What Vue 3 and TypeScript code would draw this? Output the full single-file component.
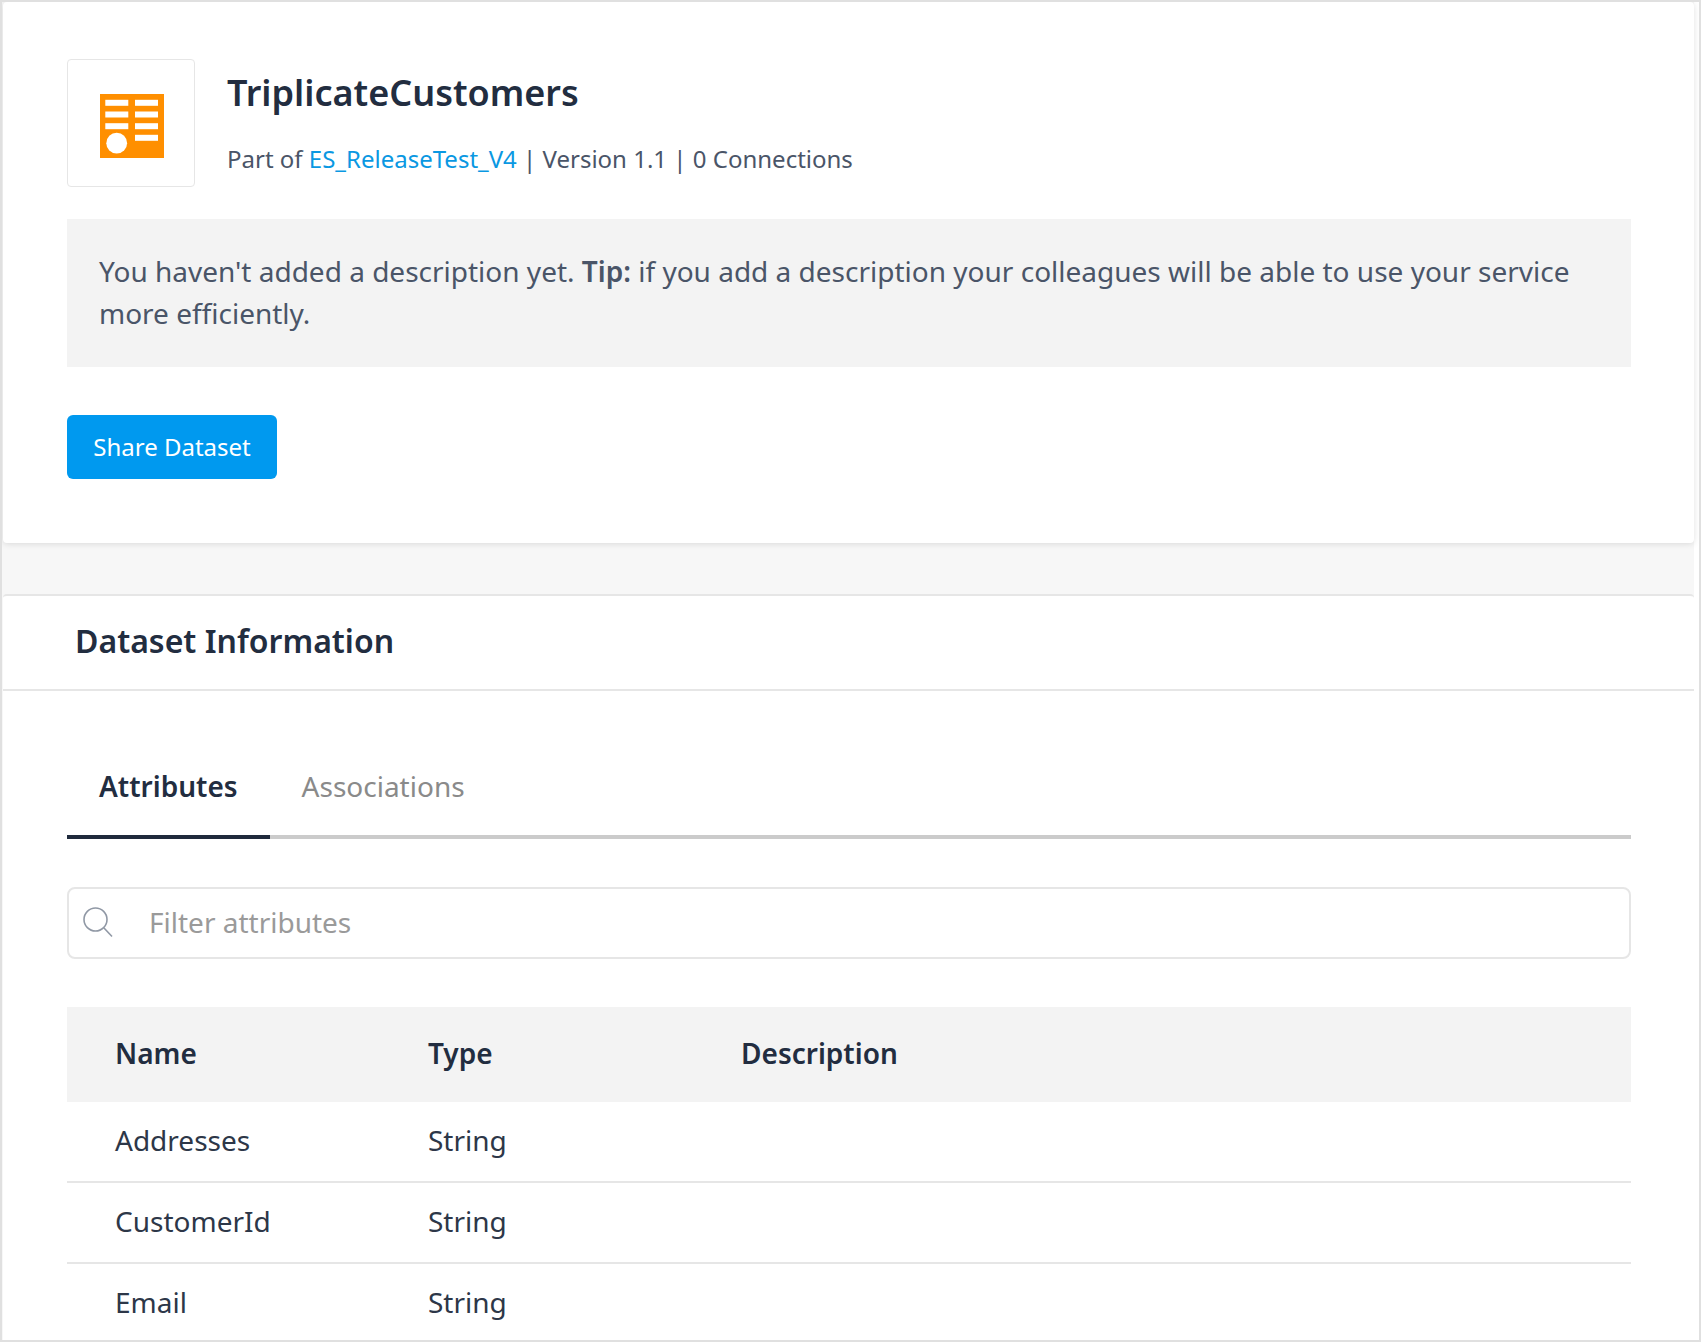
<template>
  <div class="frame">
    <div class="page">
      <section class="card summary">
        <div class="head">
          <div class="icon-box">
            <svg width="64" height="64" viewBox="0 0 64 64">
              <rect width="64" height="64" fill="#ff8f00" />
              <g fill="#fff">
                <rect v-for="(b, i) in bars" :key="i" :x="b[0]" :y="b[1]" width="23" height="6" />
              </g>
              <circle cx="16.7" cy="49.2" r="10.4" fill="#fff" />
            </svg>
          </div>
          <div class="head-text">
            <h1>TriplicateCustomers</h1>
            <p class="meta">Part of <a class="link">ES_ReleaseTest_V4</a> | Version 1.1 | 0 Connections</p>
          </div>
        </div>
        <div class="description">
          You haven't added a description yet. <b>Tip:</b> if you add a description your colleagues will be able to use your service more efficiently.
        </div>
        <button class="share">Share Dataset</button>
      </section>

      <section class="card info">
        <h2>Dataset Information</h2>
        <div class="info-body">
          <div class="tabs">
            <div class="tab active">Attributes</div>
            <div class="tab">Associations</div>
          </div>
          <div class="filter">
            <svg class="search" width="32" height="32" viewBox="0 0 32 32" fill="none" stroke="#9098a5" stroke-width="1.6">
              <circle cx="13.5" cy="13.5" r="11.5" />
              <path d="M22 22l8 8.5" />
            </svg>
            <span>Filter attributes</span>
          </div>
          <div class="table">
            <div class="row header">
              <div>Name</div>
              <div>Type</div>
              <div>Description</div>
            </div>
            <div class="row" v-for="attr in attributes" :key="attr.name">
              <div>{{ attr.name }}</div>
              <div>{{ attr.type }}</div>
              <div></div>
            </div>
          </div>
        </div>
      </section>
    </div>
  </div>
</template>

<script setup lang="ts">
const bars: [number, number][] = [
  [5.3, 5.8], [35, 5.8],
  [5.3, 17.5], [35, 17.5],
  [5.3, 29.2], [35, 29.2],
  [35, 40.8],
];

const attributes = [
  { name: 'Addresses', type: 'String' },
  { name: 'CustomerId', type: 'String' },
  { name: 'Email', type: 'String' },
];
</script>

<style>
html,
body {
  margin: 0;
  overflow: hidden;
  background: #fff;
}
</style>

<style scoped>
.frame {
  box-sizing: border-box;
  width: 1701px;
  height: 1342px;
  border: 2px solid #e0e0e0;
  overflow: hidden;
  font-family: "Noto Sans", sans-serif;
  color: #222d40;
}

.page {
  width: 1692px;
  background: #f7f7f7;
}

.card {
  margin-left: 1px;
  background: #fff;
  border-radius: 4px;
}

.summary {
  height: 541px;
  box-sizing: border-box;
  padding: 57px 63px 0 64px;
  box-shadow: 0 1px 6px rgb(0 0 0 / 12%);
}

.head {
  display: flex;
  gap: 32px;
}

.icon-box {
  box-sizing: border-box;
  width: 128px;
  height: 128px;
  padding: 5px 0 0 2px;
  border: 1px solid #e6e6e6;
  border-radius: 4px;
  display: flex;
  align-items: center;
  justify-content: center;
}

h1 {
  margin: 12px 0 0;
  font-size: 36px;
  line-height: 44px;
  font-weight: 600;
}

.meta {
  margin: 28px 0 0;
  font-size: 24px;
  line-height: 32px;
  color: #4a5568;
}

.link {
  color: #0a98e2;
}

.description {
  margin-top: 32px;
  padding: 31px 32px;
  height: 148px;
  box-sizing: border-box;
  background: #f3f3f3;
  font-size: 28px;
  line-height: 42px;
  color: #4a5568;
}

.description b {
  font-weight: 600;
}

.share {
  display: block;
  margin-top: 48px;
  padding: 0 0 2px;
  width: 210px;
  height: 64px;
  border: 0;
  border-radius: 6px;
  background: #0099ef;
  color: #fff;
  font-family: inherit;
  font-size: 24px;
}

.info {
  margin-top: 51px;
  border-top: 2px solid #e6e6e6;
}

h2 {
  margin: 0;
  height: 95px;
  box-sizing: border-box;
  padding-left: 72px;
  font-size: 32px;
  line-height: 89px;
  font-weight: 600;
  border-bottom: 2px solid #e6e6e6;
}

.info-body {
  padding: 48px 63px 0 64px;
}

.tabs {
  display: flex;
  height: 100px;
  box-sizing: border-box;
  border-bottom: 4px solid #cbcbcb;
}

.tab {
  padding: 0 32px;
  height: 100px;
  box-sizing: border-box;
  line-height: 94px;
  font-size: 28px;
  color: #8a8a8a;
}

.tab.active {
  color: #222d40;
  font-weight: 600;
  border-bottom: 4px solid #1f2a3c;
}

.filter {
  margin-top: 48px;
  height: 72px;
  box-sizing: border-box;
  border: 2px solid #e6e6e6;
  border-radius: 8px;
  display: flex;
  align-items: center;
  padding: 0 0 2px 13px;
  gap: 35px;
  font-size: 28px;
  color: #9a9a9a;
}

.table {
  margin-top: 48px;
}

.row {
  display: grid;
  grid-template-columns: 313px 313px 1fr;
  padding-left: 48px;
  height: 81px;
  box-sizing: border-box;
  align-items: center;
  font-size: 28px;
  color: #2d3748;
  border-bottom: 2px solid #e6e6e6;
}

.row > div {
  padding-bottom: 4px;
}

.row.header {
  height: 95px;
  background: #f3f3f3;
  font-weight: 600;
  color: #222d40;
  border-bottom: 0;
}
</style>
